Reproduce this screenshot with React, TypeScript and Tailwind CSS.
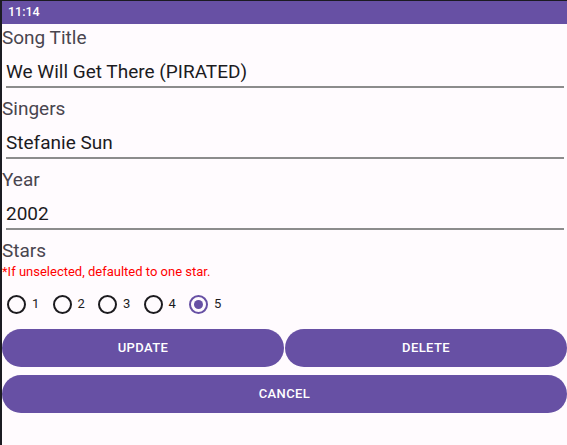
import { useState } from "react";

const fields = [
  { label: "Song Title", value: "We Will Get There (PIRATED)" },
  { label: "Singers", value: "Stefanie Sun" },
  { label: "Year", value: "2002" },
];

const Field = ({ label, value }: { label: string; value: string }) => (
  <div className="flex flex-col h-[71px]">
    <p className="h-[24px] text-[19px] leading-[24px] text-[#49454f]">{label}</p>
    <p className="mt-[10px] h-[24px] pl-[4px] text-[19px] leading-[24px] text-[#1c1b1f] whitespace-nowrap">
      {value}
    </p>
    <div className="mt-[2px] ml-[4px] mr-[3px] h-[2px] bg-[#8c8c8c]" />
  </div>
);

const Radio = ({ n, checked, onPick }: { n: number; checked: boolean; onPick: () => void }) => (
  <button onClick={onPick} className="flex items-center w-[45.5px] h-[40px]">
    <span
      className={
        "flex items-center justify-center w-[19px] h-[19px] rounded-full border-2 ml-[5px] " +
        (checked ? "border-[#6750a4]" : "border-[#1c1b1f]")
      }
    >
      {checked && <span className="w-[9px] h-[9px] rounded-full bg-[#6750a4]" />}
    </span>
    <span className="ml-[6px] text-[13px] text-[#1c1b1f]">{n}</span>
  </button>
);

export default function App() {
  const [stars, setStars] = useState(5);

  return (
    <div className="w-[567px] h-[445px] bg-[#1b1b22] pl-[2px] pt-[1px] font-['Roboto',sans-serif]">
      <div className="h-full bg-[#fffbfe] flex flex-col">
        <div className="h-[23px] bg-[#6750a4] flex items-center pl-[6px]">
          <span className="text-[12.5px] font-medium text-white">11:14</span>
        </div>

        <div className="flex flex-col pt-[2px]">
          {fields.map((f) => (
            <Field key={f.label} label={f.label} value={f.value} />
          ))}

          <p className="h-[24px] text-[19px] leading-[24px] text-[#49454f]">Stars</p>
          <p className="h-[16px] mt-[1px] text-[13px] leading-[16px] text-[#ff0000]">
            *If unselected, defaulted to one star.
          </p>
          <div className="flex mt-[4px]">
            {[1, 2, 3, 4, 5].map((n) => (
              <Radio key={n} n={n} checked={stars === n} onPick={() => setStars(n)} />
            ))}
          </div>

          <div className="flex gap-[1px] mt-[5px]">
            <button className="flex-1 h-[38px] rounded-full bg-[#6750a4] text-white text-[13px] font-medium tracking-[0.4px]">
              UPDATE
            </button>
            <button className="flex-1 h-[38px] rounded-full bg-[#6750a4] text-white text-[13px] font-medium tracking-[0.4px]">
              DELETE
            </button>
          </div>
          <button className="mt-[8px] h-[38px] rounded-full bg-[#6750a4] text-white text-[13px] font-medium tracking-[0.4px]">
            CANCEL
          </button>
        </div>
      </div>
    </div>
  );
}
